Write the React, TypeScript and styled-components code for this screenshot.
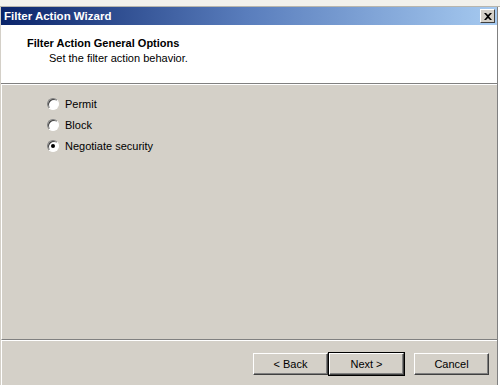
import React from "react";
import styled, { createGlobalStyle } from "styled-components";

const Global = createGlobalStyle`
  html, body { margin: 0; padding: 0; background: #ffffff; }
  body { font-family: Tahoma, "Liberation Sans", "DejaVu Sans", sans-serif; font-size: 11px; }
`;

const Page = styled.div`
  width: 500px;
  height: 387px;
  display: flex;
  flex-direction: column;
  overflow: hidden;
  background: #ffffff;
`;

const TopStrip = styled.div`
  height: 6px;
  background: #f2f1ec;
  border-bottom: 1px solid #b8b6ae;
`;

const Frame = styled.div`
  flex: 1;
  display: flex;
  flex-direction: column;
  margin-right: 2px;
  border-left: 1px solid #d4d0c8;
  border-right: 1px solid #808080;
  background: #d4d0c8;
`;

const TitleBar = styled.div`
  height: 18px;
  display: flex;
  align-items: center;
  justify-content: space-between;
  padding: 0 2px 0 3px;
  background: linear-gradient(to right, #0a246a 0%, #5a7ebd 50%, #a6caf0 100%);
  color: #ffffff;
  font-weight: bold;
  font-size: 11.5px;
`;

const CloseButton = styled.div`
  width: 15px;
  height: 14px;
  box-sizing: border-box;
  background: #d4d0c8;
  border-top: 1px solid #ffffff;
  border-left: 1px solid #ffffff;
  border-right: 1px solid #404040;
  border-bottom: 1px solid #404040;
  display: flex;
  align-items: center;
  justify-content: center;
`;

const Header = styled.div`
  height: 58px;
  background: #ffffff;
  padding: 11px 0 0 25px;
  box-sizing: border-box;
  border-left: 1px solid #ffffff;
`;

const HeaderTitle = styled.div`
  font-weight: bold;
  color: #000000;
  font-size: 11px;
  line-height: 14px;
`;

const HeaderSub = styled.div`
  color: #000000;
  font-size: 11px;
  line-height: 14px;
  margin-left: 22px;
  margin-top: 1px;
`;

const Separator = styled.div`
  height: 1px;
  background: #808080;
  border-bottom: 1px solid #ffffff;
`;

const Body = styled.div`
  flex: 1;
  display: flex;
  flex-direction: column;
  gap: 8px;
  padding: 12px 0 0 45px;
  border-left: 1px solid #ffffff;
`;

const Option = styled.label`
  display: flex;
  align-items: center;
  gap: 6px;
  height: 13px;
  color: #000000;
  font-size: 11px;
`;

const Radio = styled.span<{ $checked?: boolean }>`
  width: 12px;
  height: 12px;
  box-sizing: border-box;
  border-radius: 50%;
  background: #ffffff;
  border-top: 1px solid #808080;
  border-left: 1px solid #808080;
  border-right: 1px solid #ffffff;
  border-bottom: 1px solid #ffffff;
  box-shadow: inset 1px 1px 0 #404040;
  display: flex;
  align-items: center;
  justify-content: center;
  &::after {
    content: "";
    width: 4px;
    height: 4px;
    border-radius: 50%;
    background: ${(p) => (p.$checked ? "#000000" : "transparent")};
  }
`;

const Footer = styled.div`
  height: 46px;
  box-sizing: border-box;
  border-top: 1px solid #808080;
  border-left: 1px solid #ffffff;
  display: flex;
  flex-direction: column;
`;

const FooterInner = styled.div`
  border-top: 1px solid #ffffff;
  flex: 1;
  display: flex;
  justify-content: flex-end;
  align-items: flex-start;
  padding: 12px 8px 0 0;
`;

const Button = styled.button<{ $default?: boolean; $gap?: number }>`
  width: 75px;
  height: 22px;
  box-sizing: border-box;
  margin-left: ${(p) => p.$gap ?? 0}px;
  font-family: Tahoma, "Liberation Sans", "DejaVu Sans", sans-serif;
  font-size: 11px;
  color: #000000;
  background: #d4d0c8;
  padding: 0;
  border-top: 1px solid #ffffff;
  border-left: 1px solid #ffffff;
  border-right: 1px solid #404040;
  border-bottom: 1px solid #404040;
  box-shadow: inset -1px -1px 0 #808080
    ${(p) => (p.$default ? ", 0 0 0 1px #000000" : "")};
`;

const BottomEdge = styled.div`
  height: 2px;
  background: #ffffff;
`;

export default function App() {
  return (
    <Page>
      <Global />
      <TopStrip />
      <Frame>
        <TitleBar>
          <span>Filter Action Wizard</span>
          <CloseButton>
            <svg width="8" height="7" viewBox="0 0 8 7">
              <path d="M0 0 L2 0 L4 2 L6 0 L8 0 L5 3.5 L8 7 L6 7 L4 5 L2 7 L0 7 L3 3.5 Z" fill="#000" />
            </svg>
          </CloseButton>
        </TitleBar>
        <Header>
          <HeaderTitle>Filter Action General Options</HeaderTitle>
          <HeaderSub>Set the filter action behavior.</HeaderSub>
        </Header>
        <Separator />
        <Body>
          <Option>
            <Radio />
            Permit
          </Option>
          <Option>
            <Radio />
            Block
          </Option>
          <Option>
            <Radio $checked />
            Negotiate security
          </Option>
        </Body>
        <Footer>
          <FooterInner>
            <Button>&lt; Back</Button>
            <Button $default $gap={1}>Next &gt;</Button>
            <Button $gap={10}>Cancel</Button>
          </FooterInner>
        </Footer>
      </Frame>
      <BottomEdge />
    </Page>
  );
}
